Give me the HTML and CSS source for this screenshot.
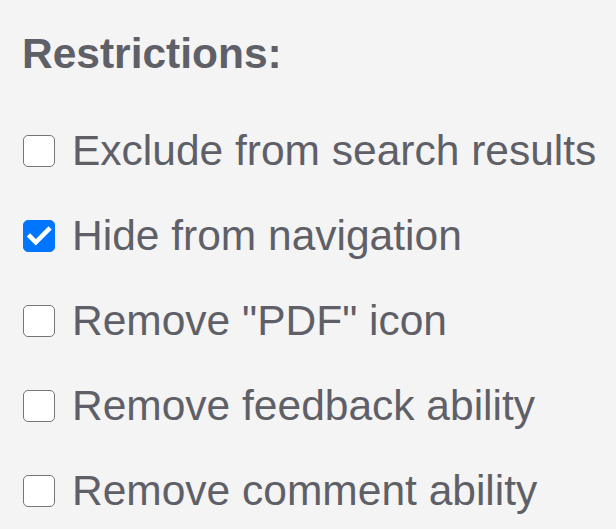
FILE: index.html
```html
<!DOCTYPE html>
<html lang="en">
<head>
<meta charset="utf-8">
<title>Restrictions</title>
<link rel="stylesheet" href="styles.css">
</head>
<body>
<section class="panel">
  <h2 class="title">Restrictions:</h2>
  <ul class="options">
    <li class="option"><span class="box"></span><span class="label">Exclude from search results</span></li>
    <li class="option"><span class="box checked"><svg viewBox="0 0 32 32" width="32" height="32"><path d="M7 16.5 L12.8 22.3 L25.5 9.6" fill="none" stroke="#fff" stroke-width="4.6" stroke-linecap="square"/></svg></span><span class="label">Hide from navigation</span></li>
    <li class="option"><span class="box"></span><span class="label">Remove "PDF" icon</span></li>
    <li class="option"><span class="box"></span><span class="label">Remove feedback ability</span></li>
    <li class="option"><span class="box"></span><span class="label">Remove comment ability</span></li>
  </ul>
</section>
</body>
</html>
```
FILE: styles.css
```css
html, body {
  margin: 0;
  padding: 0;
  background: #f4f4f4;
}
body {
  font-family: "Liberation Sans", Arial, sans-serif;
  color: #5f6067;
}
.panel {
  padding: 30px 0 0 22px;
}
.title {
  margin: 0 0 49px 0;
  font-size: 42.5px;
  line-height: 48px;
  font-weight: bold;
}
.options {
  list-style: none;
  margin: 0;
  padding: 0;
  display: flex;
  flex-direction: column;
  gap: 37px;
}
.option {
  display: flex;
  align-items: center;
  gap: 17px;
  font-size: 42.5px;
  line-height: 48px;
  white-space: nowrap;
}
.box {
  box-sizing: border-box;
  width: 32px;
  height: 32px;
  margin-left: 1px;
  border: 1.5px solid #767676;
  border-radius: 5px;
  background: #fff;
  flex: none;
  display: block;
}
.box.checked {
  background: #0075ff;
  border-color: #0075ff;
}
.box svg {
  display: block;
  margin: -1.5px;
}
```
